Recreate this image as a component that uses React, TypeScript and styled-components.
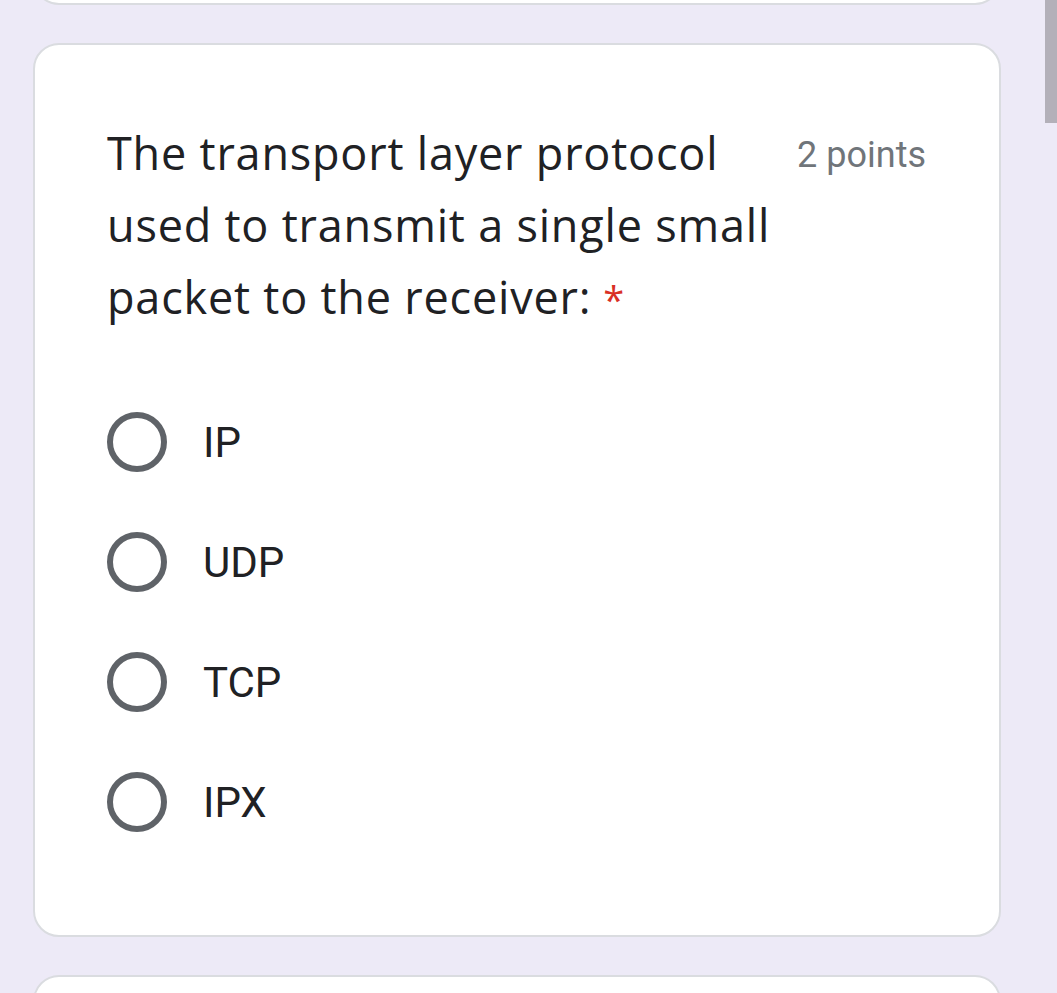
import styled, { createGlobalStyle } from 'styled-components';

const GlobalStyle = createGlobalStyle`
  html, body {
    margin: 0;
    padding: 0;
    background: #edeaf7;
  }
`;

const Page = styled.div`
  height: 993px;
  overflow: hidden;
  padding: 0 56px 0 33px;
  display: flex;
  flex-direction: column;
  gap: 38px;
  background: #edeaf7;
`;

const Card = styled.div<{ $peek?: number; $top?: boolean }>`
  box-sizing: border-box;
  width: 968px;
  flex-shrink: 0;
  background: #fff;
  border: 2px solid #dadce0;
  border-radius: 26px;
  ${({ $top }) => ($top ? 'height: 120px; margin-top: -115px;' : '')}
  ${({ $peek }) => ($peek ? `height: ${$peek}px;` : '')}
`;

const QuestionCard = styled(Card)`
  padding: 72px 73px 73px 72px;
`;

const Header = styled.div`
  display: flex;
  justify-content: space-between;
  align-items: flex-start;
`;

const Title = styled.div`
  width: 690px;
  flex-shrink: 0;
  font-family: 'Open Sans', sans-serif;
  font-size: 45px;
  line-height: 72px;
  color: #202124;
  letter-spacing: 0.8px;
`;

const Required = styled.span`
  color: #d93025;
  font-size: 38px;
  margin-left: 12px;
`;

const Points = styled.div`
  font-family: Roboto, sans-serif;
  font-size: 36px;
  line-height: 76px;
  color: #70757a;
  white-space: nowrap;
`;

const Options = styled.div`
  margin-top: 47px;
  display: flex;
  flex-direction: column;
`;

const Option = styled.label`
  height: 120px;
  display: flex;
  align-items: center;
  gap: 36px;
  font-family: Roboto, sans-serif;
  font-size: 42px;
  color: #202124;
`;

const Radio = styled.span`
  box-sizing: border-box;
  width: 60px;
  height: 60px;
  border-radius: 50%;
  border: 6px solid #5f6368;
  flex-shrink: 0;
`;

const Scrollbar = styled.div`
  position: fixed;
  top: 0;
  right: 0;
  width: 12px;
  height: 123px;
  background: #b3b0b9;
`;

const choices = ['IP', 'UDP', 'TCP', 'IPX'];

export default function App() {
  return (
    <>
      <GlobalStyle />
      <Page>
        <Card $top />
        <QuestionCard>
          <Header>
            <Title>
              The transport layer protocol used to transmit a single small packet to the receiver:
              <Required>*</Required>
            </Title>
            <Points>2 points</Points>
          </Header>
          <Options>
            {choices.map((c) => (
              <Option key={c}>
                <Radio />
                {c}
              </Option>
            ))}
          </Options>
        </QuestionCard>
        <Card $peek={200} />
      </Page>
      <Scrollbar />
    </>
  );
}
